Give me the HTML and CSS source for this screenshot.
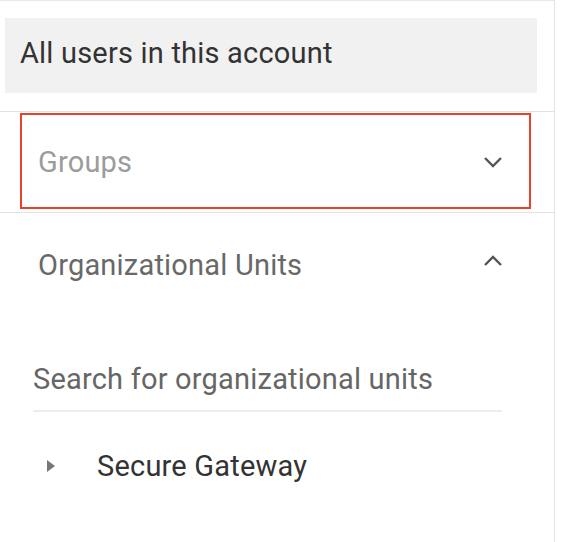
FILE: index.html
```html
<!DOCTYPE html>
<html lang="en">
<head>
    <meta charset="UTF-8">
    <meta name="viewport" content="width=device-width, initial-scale=1.0">
    <title>Users</title>
    <link rel="stylesheet" href="styles.css">
</head>
<body>
    <div class="panel">
        <div class="all-users-wrap">
            <div class="all-users">All users in this account</div>
        </div>

        <!-- Groups (collapsed) -->
        <div class="section">
            <div class="section-head selected">
                <span class="title muted">Groups</span>
                <svg class="chevron" width="20" height="12" viewBox="0 0 20 12">
                    <path d="M2 2l8 8 8-8" fill="none" stroke="#555" stroke-width="2.4"/>
                </svg>
            </div>
        </div>

        <!-- Organizational units (expanded) -->
        <div class="section open">
            <div class="section-head">
                <span class="title">Organizational Units</span>
                <svg class="chevron up" width="20" height="12" viewBox="0 0 20 12">
                    <path d="M2 10l8-8 8 8" fill="none" stroke="#555" stroke-width="2.4"/>
                </svg>
            </div>
            <div class="search">Search for organizational units</div>
            <div class="tree-item">
                <span class="caret"></span>
                <span class="tree-label">Secure Gateway</span>
            </div>
        </div>
    </div>
</body>
</html>
```

FILE: styles.css
```css
body {
    margin: 0;
    background-color: #fff;
    font-family: Roboto, "Liberation Sans", sans-serif;
    letter-spacing: 0.2px;
}

.panel {
    width: 555px;
    height: 542px;
    border-top: 1px solid #e8e8e8;
    border-right: 1px solid #e4e4e4;
    box-sizing: border-box;
}

.all-users-wrap {
    padding: 17px 17px 18px 5px;
    border-bottom: 1px solid #e2e2e2;
}

.all-users {
    background-color: #f1f1f1;
    height: 75px;
    line-height: 71px;
    padding: 0 0 4px 15px;
    box-sizing: border-box;
    font-size: 29px;
    color: #333;
}

.section {
    border-bottom: 1px solid #e2e2e2;
}

.section.open {
    border-bottom: none;
}

.section-head {
    display: flex;
    align-items: center;
    justify-content: space-between;
    height: 96px;
    margin: 1px 23px 3px 20px;
    padding: 0 28px 0 18px;
    box-sizing: border-box;
}

.section-head.selected {
    border: 2px solid #e5432c;
    padding: 2px 26px 0 16px;
}

.section.open .section-head {
    height: 104px;
    margin: 0 23px 0 20px;
}

.chevron.up {
    margin-top: -8px;
}

.title {
    font-size: 29px;
    color: #686868;
}

.title.muted {
    color: #9c9c9c;
}

.search {
    margin: 0 52px 0 33px;
    padding: 45px 0 14px;
    line-height: 34px;
    font-size: 29px;
    color: #666;
    border-bottom: 2px solid #ededed;
}

.tree-item {
    display: flex;
    align-items: center;
    height: 102px;
    padding: 5px 0 0 47px;
    box-sizing: border-box;
}

.caret {
    width: 0;
    height: 0;
    border-top: 6px solid transparent;
    border-bottom: 6px solid transparent;
    border-left: 8px solid #777;
}

.tree-label {
    margin-left: 42px;
    font-size: 29px;
    color: #333;
}
```
